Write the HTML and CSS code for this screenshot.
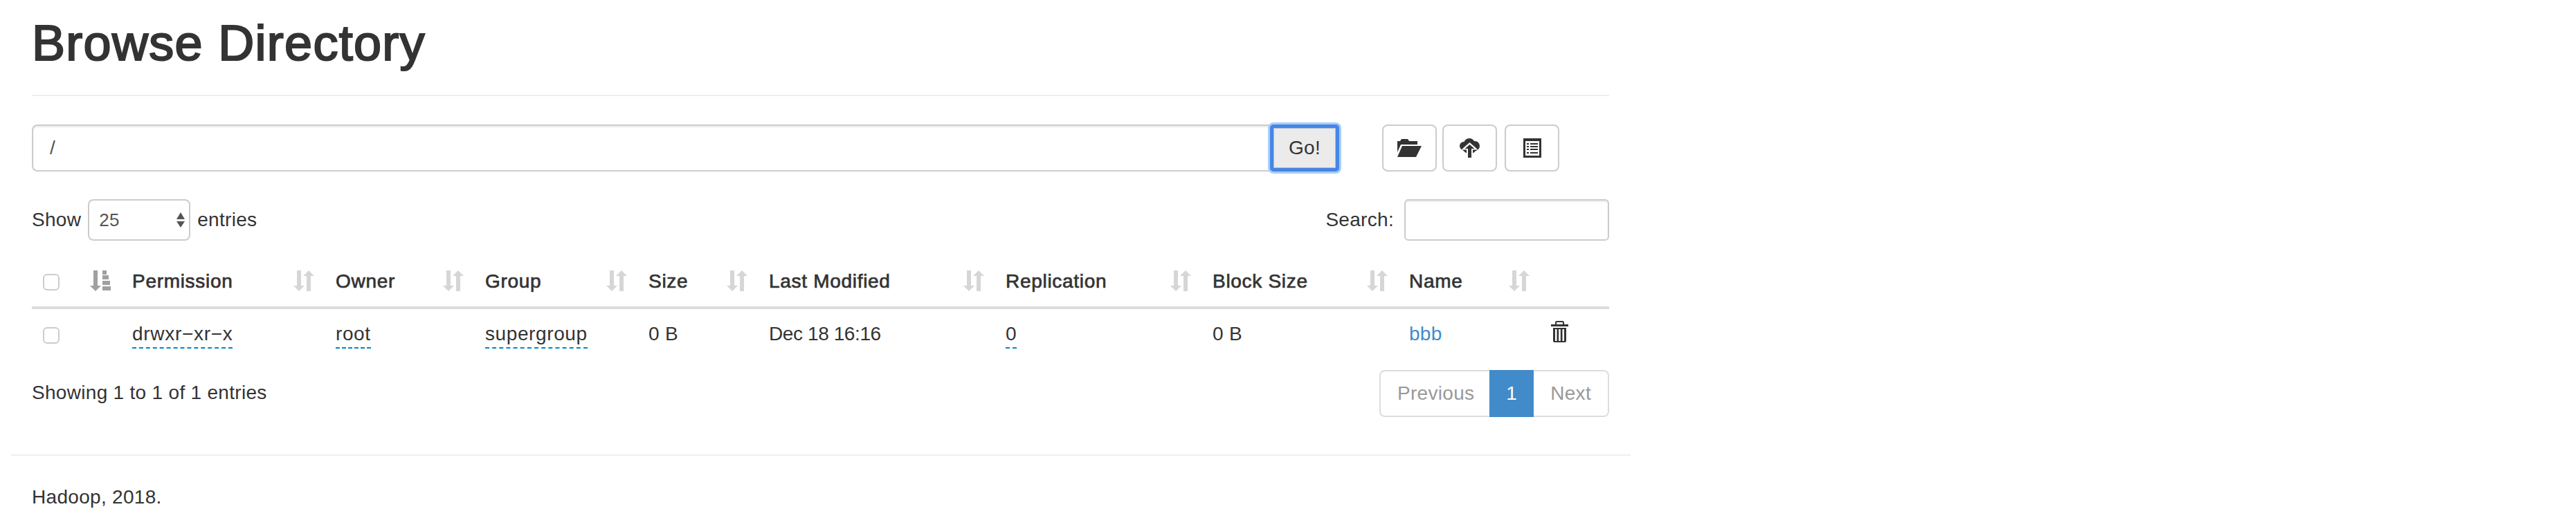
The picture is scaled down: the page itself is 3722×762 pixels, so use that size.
FILE: index.html
```html
<!DOCTYPE html>
<html lang="en">
<head>
    <meta charset="UTF-8">
    <title>Browsing HDFS</title>
    <link rel="stylesheet" href="styles.css">
</head>
<body>
    <svg class="sprites" width="0" height="0">
        <symbol id="sort-both" viewBox="0 0 30 30">
            <path d="M5 0h6v22h5l-8 8-8-8h5z"/>
            <path d="M19 30h6V8h5l-8-8-8 8h5z"/>
        </symbol>
    </svg>

    <div class="container">
        <div class="page-header">
            <h1>Browse Directory</h1>
        </div>

        <!-- Path input and toolbar -->
        <div class="toolbar">
            <input type="text" class="path-input" value="/">
            <button class="go-button">Go!</button>
            <button class="tool-button tool-first" title="Create Directory">
                <svg width="35" height="26" viewBox="0 0 35 26"><path d="M0 3h4l2-3h9l2 3h12v5H5L0 19z"/><path d="M7 10h28l-8 16H0z"/></svg>
            </button>
            <button class="tool-button" title="Upload Files">
                <svg width="29" height="28" viewBox="0 0 29 28">
                    <circle cx="6" cy="11" r="6"/>
                    <circle cx="14" cy="8" r="8"/>
                    <circle cx="22" cy="11" r="7"/>
                    <path d="M1 14l8 7h11l8-7z"/>
                    <path d="M14.500 8l-8 7h5v13h6V15h5z" stroke="#fff" stroke-width="3" fill="#fff"/>
                    <path d="M14.500 9l-7 6h4.500v13h5V15h4.500z"/>
                </svg>
            </button>
            <button class="tool-button tool-last" title="Cut">
                <svg width="26" height="28" viewBox="0 0 26 28">
                    <path fill-rule="evenodd" d="M0 0h26v28H0zM3 4v21h20V4z"/>
                    <path d="M5 7h3v2H5zM10 7h11v2H10zM5 11h3v2H5zM10 11h11v2H10zM5 15h3v2H5zM10 15h11v2H10zM5 20h3v2H5zM10 20h11v2H10z"/>
                </svg>
            </button>
        </div>

        <!-- Length and search -->
        <div class="table-controls">
            <label class="length-label">Show
                <span class="select-wrap">
                    <select class="length-select">
                        <option>25</option>
                    </select>
                    <svg class="select-arrows" width="12" height="22" viewBox="0 0 12 22"><path d="M6 0l6 10H0zM0 13h12l-6 9z"/></svg>
                </span>
                entries</label>
            <label class="search-label">Search: <input type="text" class="search-input"></label>
        </div>

        <table class="file-table">
            <colgroup>
                <col class="c-check"><col class="c-icon"><col class="c-perm"><col class="c-owner"><col class="c-group"><col class="c-size">
                <col class="c-date"><col class="c-repl"><col class="c-block"><col class="c-name"><col class="c-del">
            </colgroup>
            <thead>
                <tr>
                    <th><input type="checkbox" class="check"></th>
                    <th class="sortable">
                        <svg class="sort-icon sort-active" width="30" height="30" viewBox="0 0 30 30">
                            <path d="M5 0h6v22h5l-8 8-8-8h5z"/>
                            <path d="M18 0h6v6h-6zM18 7h9v6h-9zM18 15h11v6H18zM18 23h13v6H18z"/>
                        </svg>
                    </th>
                    <th class="sortable">Permission<svg class="sort-icon"><use href="#sort-both"/></svg></th>
                    <th class="sortable">Owner<svg class="sort-icon"><use href="#sort-both"/></svg></th>
                    <th class="sortable">Group<svg class="sort-icon"><use href="#sort-both"/></svg></th>
                    <th class="sortable">Size<svg class="sort-icon"><use href="#sort-both"/></svg></th>
                    <th class="sortable">Last Modified<svg class="sort-icon"><use href="#sort-both"/></svg></th>
                    <th class="sortable">Replication<svg class="sort-icon"><use href="#sort-both"/></svg></th>
                    <th class="sortable">Block Size<svg class="sort-icon"><use href="#sort-both"/></svg></th>
                    <th class="sortable">Name<svg class="sort-icon"><use href="#sort-both"/></svg></th>
                    <th></th>
                </tr>
            </thead>
            <tbody>
                <tr>
                    <td><input type="checkbox" class="check"></td>
                    <td></td>
                    <td><span class="editable dash-text">drwxr−xr−x</span></td>
                    <td><span class="editable">root</span></td>
                    <td><span class="editable">supergroup</span></td>
                    <td>0 B</td>
                    <td class="date-cell">Dec 18 16:16</td>
                    <td><span class="editable">0</span></td>
                    <td>0 B</td>
                    <td><a href="#" class="file-link">bbb</a></td>
                    <td>
                        <svg class="trash" width="25" height="31" viewBox="0 0 25 31">
                            <path d="M7 5V2.500Q7 1 8.500 1h8Q18 1 18 2.500V5" fill="none" stroke="#333" stroke-width="2"/>
                            <path d="M0 5h25v3H0z"/>
                            <path fill-rule="evenodd" d="M3 10h19v19q0 2-2 2H5q-2 0-2-2zM6 12v17h2.500V12zM11.200 12v17h2.600V12zM16.500 12v17H19V12z"/>
                        </svg>
                    </td>
                </tr>
            </tbody>
        </table>

        <div class="table-footer">
            <div class="table-info">Showing 1 to 1 of 1 entries</div>
            <ul class="pagination">
                <li class="disabled"><a href="#">Previous</a></li>
                <li class="active"><a href="#">1</a></li>
                <li class="disabled"><a href="#">Next</a></li>
            </ul>
        </div>
    </div>

    <div class="footer-wrap">
        <hr>
        <footer>Hadoop, 2018.</footer>
    </div>
</body>
</html>
```

FILE: styles.css
```css
body {
    font-family: "Liberation Sans", Arial, sans-serif;
    font-size: 28px;
    line-height: 40px;
    letter-spacing: 0.3px;
    color: #333;
    background-color: #fff;
    margin: 0;
}

.sprites {
    display: block;
}

.container {
    width: 2279px;
    margin-left: 46px;
}

.page-header {
    padding-top: 23px;
    height: 114px;
    border-bottom: 2px solid #eee;
    margin-bottom: 41px;
}

/* medium weight, neither installed regular nor bold is close */
h1 {
    font-size: 72px;
    line-height: 79px;
    font-weight: 400;
    letter-spacing: 1.300px;
    -webkit-text-stroke: 2.200px #333;
    margin: 0;
}

input, select, button {
    font-family: inherit;
    letter-spacing: inherit;
    box-sizing: border-box;
}

/* Path input and toolbar */
.toolbar {
    display: flex;
    height: 68px;
}

.path-input {
    width: 1789px;
    height: 68px;
    padding: 12px 24px;
    font-size: 28px;
    color: #555;
    border: 2px solid #ccc;
    border-right: none;
    border-radius: 8px 0 0 8px;
    box-shadow: inset 0 2px 2px rgba(0, 0, 0, 0.075);
    outline: none;
}

.go-button {
    width: 100px;
    height: 68px;
    padding: 0;
    font-size: 28px;
    color: #333;
    background-color: #ebebeb;
    border: 5px solid #4686e6;
    border-radius: 5px;
    box-shadow: 0 0 0 3px #a9cdf9, inset 0 0 0 1px #aebccd;
    position: relative;
}

.tool-button {
    width: 79px;
    height: 68px;
    padding: 0;
    margin-left: 8px;
    background-color: #fff;
    border: 2px solid #ccc;
    border-radius: 8px;
    display: flex;
    align-items: center;
    justify-content: center;
}

.tool-button svg {
    fill: #333;
}

.tool-first {
    margin-left: 62px;
}

.tool-last {
    margin-left: 11px;
}

/* Length and search */
.table-controls {
    display: flex;
    justify-content: space-between;
    align-items: center;
    margin-top: 40px;
    height: 60px;
}

.length-label, .search-label {
    display: flex;
    align-items: center;
}

.select-wrap {
    position: relative;
    display: block;
    margin: 0 10px;
}

.length-select {
    display: block;
    appearance: none;
    width: 148px;
    height: 60px;
    padding: 0 14px;
    font-size: 26px;
    color: #555;
    background-color: #fff;
    border: 2px solid #ccc;
    border-radius: 8px;
}

.select-arrows {
    position: absolute;
    top: 19px;
    right: 8px;
    fill: #555;
}

.search-input {
    width: 296px;
    height: 60px;
    margin-left: 15px;
    border: 2px solid #ccc;
    border-radius: 6px;
    box-shadow: inset 0 2px 2px rgba(0, 0, 0, 0.075);
}

/* Table */
.file-table {
    width: 2279px;
    table-layout: fixed;
    border-collapse: collapse;
    margin-top: 23px;
}

.c-check { width: 56px; }
.c-icon { width: 73px; }
.c-perm { width: 294px; }
.c-owner { width: 216px; }
.c-group { width: 236px; }
.c-size { width: 174px; }
.c-date { width: 342px; }
.c-repl { width: 299px; }
.c-block { width: 284px; }
.c-name { width: 205px; }
.c-del { width: 100px; }

th, td {
    padding: 16px;
    text-align: left;
    vertical-align: top;
}

th {
    font-weight: 400;
    letter-spacing: 0.700px;
    -webkit-text-stroke: 0.700px #333;
    border-bottom: 4px solid #ddd;
}

.sortable {
    position: relative;
}

.sort-icon {
    position: absolute;
    top: 20px;
    right: 15px;
    width: 30px;
    height: 30px;
    fill: #d6d6d6;
}

.sort-active {
    fill: #a0a0a0;
}

.check {
    appearance: none;
    display: block;
    width: 24px;
    height: 24px;
    margin: 9px 0 0;
    background-color: #fff;
    border: 2px solid #ccc;
    border-radius: 6px;
}

td .check {
    margin-top: 10px;
}

.editable {
    padding-bottom: 4px;
    letter-spacing: 0.600px;
    border-bottom: 2px dashed #0088cc;
}

.dash-text {
    letter-spacing: 0.700px;
}

.date-cell {
    letter-spacing: -0.400px;
}

.file-link {
    color: #428bca;
    text-decoration: none;
}

.trash {
    display: block;
    margin-top: 1px;
    fill: #333;
}

/* Info and pagination */
.table-footer {
    display: flex;
    justify-content: space-between;
    align-items: flex-start;
    margin-top: 16px;
}

.table-info {
    padding-top: 13px;
}

.pagination {
    display: flex;
    list-style: none;
    margin: 0;
    padding: 0;
}

.pagination a {
    display: block;
    padding: 12px 24px;
    text-decoration: none;
    border: 2px solid #ddd;
    background-color: #fff;
}

.pagination .disabled a {
    color: #999;
}

.pagination li:first-child a {
    padding-right: 22px;
    border-radius: 8px 0 0 8px;
    border-right: none;
}

.pagination li:last-child a {
    border-radius: 0 8px 8px 0;
    border-left: none;
}

.pagination .active a {
    color: #fff;
    background-color: #428bca;
    border-color: #428bca;
    border-left-width: 0;
    border-right-width: 0;
}

/* Footer */
.footer-wrap {
    width: 2340px;
    margin-left: 16px;
}

hr {
    border: none;
    border-top: 2px solid #eee;
    margin: 54px 0 40px;
}

footer {
    padding-left: 30px;
}
```
